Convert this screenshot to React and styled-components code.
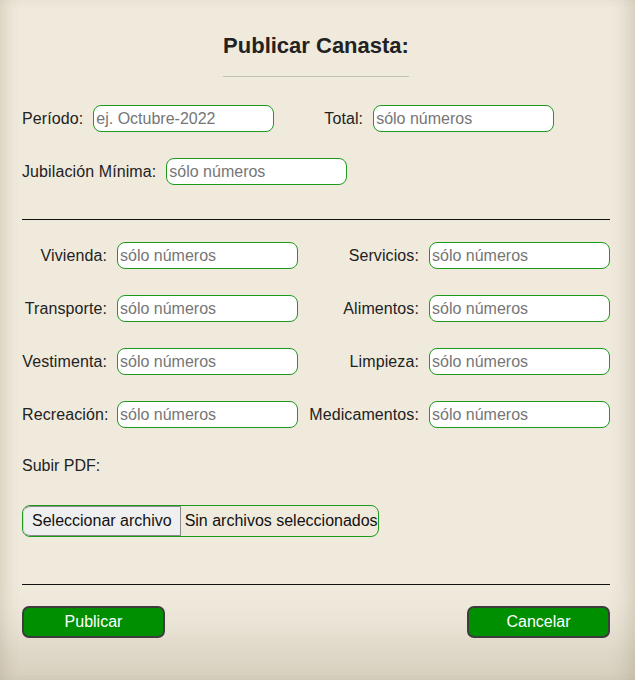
import React from 'react';
import styled, { createGlobalStyle } from 'styled-components';

const GlobalStyle = createGlobalStyle`
  * {
    margin: 0;
    padding: 0;
    box-sizing: border-box;
  }

  body {
    margin: 0;
    background: #f0eadd;
    font-family: 'Liberation Sans', Arial, sans-serif;
  }
`;

const Modal = styled.div`
  min-height: 680px;
  padding: 0 25px 0 22px;
  background: #f0eadd;
  box-shadow: inset 12px 0 18px -10px rgba(90, 75, 40, 0.18),
    inset -18px 0 22px -14px rgba(90, 75, 40, 0.2),
    inset 0 -70px 50px -30px rgba(90, 75, 40, 0.16);
  color: #222;
`;

const Header = styled.div`
  display: flex;
  justify-content: center;
  padding-top: 33px;
`;

const Title = styled.h2`
  font-size: 22px;
  font-weight: bold;
  line-height: 26px;
  color: #222;
  padding-bottom: 17px;
  border-bottom: 1px solid #c4c1b4;
`;

const TopSection = styled.div`
  display: flex;
  flex-direction: column;
  gap: 26px;
  padding-top: 28px;
`;

const Row = styled.div`
  display: flex;
  align-items: center;
  gap: 50px;
`;

const Field = styled.div`
  display: flex;
  align-items: center;
  gap: 10px;
`;

const Label = styled.label`
  font-size: 16px;
  letter-spacing: 0.1px;
  color: #222;
  white-space: nowrap;
  text-align: ${props => (props.$right ? 'right' : 'left')};
`;

const Input = styled.input`
  width: 181px;
  height: 27px;
  padding: 0 2px;
  border: 1px solid #1d9a1d;
  border-radius: 8px;
  background: #fff;
  font-family: 'Liberation Sans', Arial, sans-serif;
  font-size: 16px;
  color: #222;

  &::placeholder {
    color: #767676;
  }

  &:focus {
    outline: none;
  }
`;

const Divider = styled.hr`
  border: none;
  border-top: 1px solid #111;
  margin: ${props => props.$margin};
`;

const CostGrid = styled.div`
  display: grid;
  grid-template-columns: 85px 181px 1fr 181px;
  column-gap: 10px;
  row-gap: 26px;
  align-items: center;
`;

const UploadLabel = styled.div`
  font-size: 16px;
  line-height: 18px;
  color: #222;
  margin-top: 29px;
`;

const FileBox = styled.label`
  display: inline-flex;
  align-items: center;
  height: 32px;
  margin-top: 30px;
  border: 1px solid #1d9a1d;
  border-radius: 8px;
  overflow: hidden;
  font-size: 16px;
  color: #111;
  cursor: pointer;
`;

const FileButton = styled.span`
  display: flex;
  align-items: center;
  height: 100%;
  padding: 0 8px;
  background: #efefef;
  border: 1px solid #8a8a8a;
  border-top-left-radius: 7px;
  border-bottom-left-radius: 7px;
  border-left: 1px solid #d5d5d5;
`;

const FileName = styled.span`
  padding: 0 0 0 4px;
  white-space: nowrap;
`;

const Actions = styled.div`
  display: flex;
  justify-content: space-between;
`;

const ActionButton = styled.button`
  width: 143px;
  height: 32px;
  background: #008f00;
  color: #fff;
  border: 2px solid #3d3d3d;
  border-radius: 7px;
  font-family: 'Liberation Sans', Arial, sans-serif;
  font-size: 16px;
  cursor: pointer;
`;

const costs = [
  ['Vivienda', 'Servicios'],
  ['Transporte', 'Alimentos'],
  ['Vestimenta', 'Limpieza'],
  ['Recreación', 'Medicamentos'],
];

function App() {
  return (
    <>
      <GlobalStyle />
      <Modal>
        <Header>
          <Title>Publicar Canasta:</Title>
        </Header>

        <TopSection>
          <Row>
            <Field>
              <Label>Período:</Label>
              <Input placeholder="ej. Octubre-2022" />
            </Field>
            <Field>
              <Label>Total:</Label>
              <Input placeholder="sólo números" />
            </Field>
          </Row>
          <Row>
            <Field>
              <Label>Jubilación Mínima:</Label>
              <Input placeholder="sólo números" />
            </Field>
          </Row>
        </TopSection>

        <Divider $margin="34px 0 22px" />

        <CostGrid>
          {costs.map(([left, right]) => (
            <React.Fragment key={left}>
              <Label $right>{left}:</Label>
              <Input placeholder="sólo números" />
              <Label $right>{right}:</Label>
              <Input placeholder="sólo números" />
            </React.Fragment>
          ))}
        </CostGrid>

        <UploadLabel>Subir PDF:</UploadLabel>
        <FileBox>
          <FileButton>Seleccionar archivo</FileButton>
          <FileName>Sin archivos seleccionados</FileName>
        </FileBox>

        <Divider $margin="47px 0 21px" />

        <Actions>
          <ActionButton>Publicar</ActionButton>
          <ActionButton>Cancelar</ActionButton>
        </Actions>
      </Modal>
    </>
  );
}

export default App;
